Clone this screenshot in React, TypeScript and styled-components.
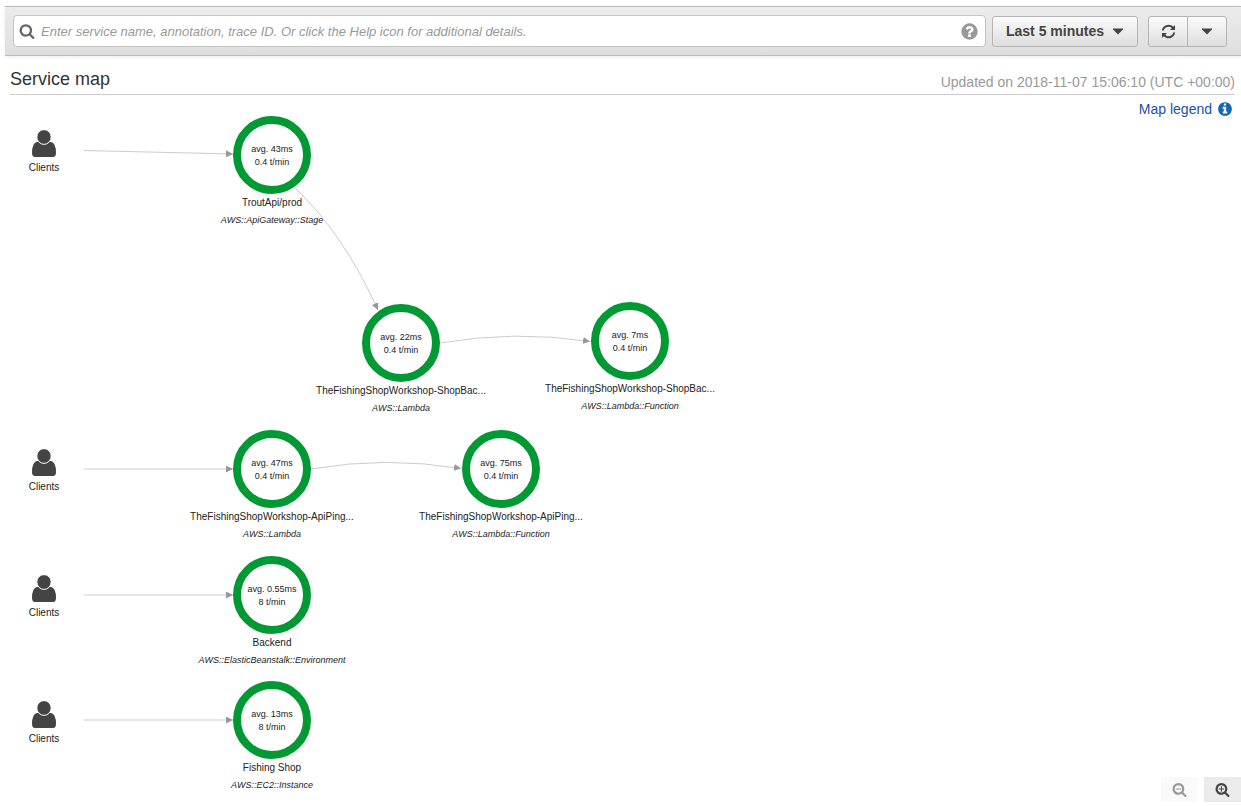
import React from "react";
import styled, { createGlobalStyle } from "styled-components";

const Global = createGlobalStyle`
  *, *::before, *::after { box-sizing: border-box; }
  body {
    margin: 0;
    background: #fff;
    color: #444;
    font-family: "Liberation Sans", Arial, Helvetica, sans-serif;
    font-size: 14px;
  }
`;

const LENS =
  "M1216 832q0-185-131.5-316.5t-316.5-131.5-316.5 131.5-131.5 316.5 131.5 316.5 316.5 131.5 316.5-131.5 131.5-316.5zm512 832q0 52-38 90t-90 38q-54 0-90-38l-343-342q-179 124-399 124-143 0-273.5-55.5t-225-150-150-225-55.5-273.5 55.5-273.5 150-225 225-150 273.5-55.5 273.5 55.5 225 150 150 225 55.5 273.5q0 220-124 399l343 343q37 37 37 90z";
const DISC =
  "M1664 896q0 209-103 385.5t-279.5 279.5-385.5 103-385.5-103-279.5-279.5-103-385.5 103-385.5 279.5-279.5 385.5-103 385.5 103 279.5 279.5 103 385.5z";

const icons = {
  search: LENS,
  zoomIn:
    "M1088 800v64q0 13-9.5 22.5t-22.5 9.5h-224v224q0 13-9.5 22.5t-22.5 9.5h-64q-13 0-22.5-9.5t-9.5-22.5v-224h-224q-13 0-22.5-9.5t-9.5-22.5v-64q0-13 9.5-22.5t22.5-9.5h224v-224q0-13 9.5-22.5t22.5-9.5h64q13 0 22.5 9.5t9.5 22.5v224h224q13 0 22.5 9.5t9.5 22.5z" +
    LENS,
  zoomOut:
    "M1088 800v64q0 13-9.5 22.5t-22.5 9.5h-576q-13 0-22.5-9.5t-9.5-22.5v-64q0-13 9.5-22.5t22.5-9.5h576q13 0 22.5 9.5t9.5 22.5z" +
    LENS,
  help:
    "M1024 1376v-192q0-14-9-23t-23-9h-192q-14 0-23 9t-9 23v192q0 14 9 23t23 9h192q14 0 23-9t9-23zm256-672q0-88-55.5-163t-138.5-116-170-41q-243 0-371 213-15 24 8 42l132 100q7 6 19 6 16 0 25-12 53-68 86-92 34-24 86-24 48 0 85.5 26t37.5 59q0 38-20 61t-68 45q-63 28-115.5 86.5t-52.5 125.5v36q0 14 9 23t23 9h192q14 0 23-9t9-23q0-19 21.5-49.5t54.5-49.5q32-18 49-28.5t46-35 44.5-48 28-60.5 12.5-81z" +
    DISC,
  info:
    "M1152 1376v-160q0-14-9-23t-23-9h-96v-512q0-14-9-23t-23-9h-320q-14 0-23 9t-9 23v160q0 14 9 23t23 9h96v320h-96q-14 0-23 9t-9 23v160q0 14 9 23t23 9h448q14 0 23-9t9-23zm-128-896v-160q0-14-9-23t-23-9h-192q-14 0-23 9t-9 23v160q0 14 9 23t23 9h192q14 0 23-9t9-23z" +
    DISC,
  refresh:
    "M1600 1040q-50 250-248 408t-456 158q-136 0-262-54t-226-150l-140 128q-20 16-40 8t-20-34v-420q0-36 36-36h424q28 0 36 20t-10 40l-148 140q72 72 164 110t190 38q150 0 276-80t188-214q12-32 20-78 6-20 28-20h158q34 0 30 36zM192 752q50-250 248-408t456-158q136 0 262 54t226 150l140-128q20-16 40-8t20 34v420q0 36-36 36h-424q-28 0-36-20t10-40l148-140q-72-72-164-110t-190-38q-150 0-276 80t-188 214q-12 32-20 78-6 20-28 20h-158q-34 0-30-36z",
  caret:
    "M1408 704q0 26-19 45l-448 448q-19 19-45 19t-45-19l-448-448q-19-19-19-45t19-45 45-19h896q26 0 45 19t19 45z",
};

const Icon = ({ name, size }: { name: keyof typeof icons; size: number }) => (
  <svg width={size} height={size} viewBox="0 0 1792 1792" fill="currentColor" fillRule="evenodd" aria-hidden="true">
    <path d={icons[name]} />
  </svg>
);

const Page = styled.div`
  display: flex;
  flex-direction: column;
  min-height: 100vh;
  padding-top: 6px;
`;

const Toolbar = styled.form`
  display: flex;
  align-items: center;
  margin-left: 5px;
  padding: 8px 14px 8px 8px;
  height: 50px;
  border-top: 1px solid #bbb;
  border-bottom: 1px solid #bbb;
  background: linear-gradient(#ececec, #dedede);
  box-shadow: 0 1px 4px rgba(0, 0, 0, 0.08);
`;

const SearchBox = styled.div`
  display: flex;
  flex: 1;
  align-items: center;
  height: 32px;
  padding: 0 6px 0 5px;
  border: 1px solid #c4c4c4;
  border-radius: 4px;
  background: #fff;
  color: #666;
`;

const SearchInput = styled.input`
  flex: 1;
  min-width: 0;
  padding: 0 6px;
  border: 0;
  outline: 0;
  background: none;
  font: italic 13px "Liberation Sans", Arial, sans-serif;
  color: #444;
  &::placeholder { color: #999; opacity: 1; }
`;

const HelpButton = styled.button`
  display: flex;
  padding: 0;
  border: 0;
  background: none;
  color: #999;
`;

const Button = styled.button`
  display: flex;
  align-items: center;
  justify-content: center;
  gap: 5px;
  height: 31px;
  border: 1px solid #b4b4b4;
  border-radius: 3px;
  background: linear-gradient(#fbfbfb, #dedede);
  color: #444;
  font: bold 14px "Liberation Sans", Arial, sans-serif;
  white-space: nowrap;
`;

const RangeButton = styled(Button)`
  margin: 0 10px 0 6px;
  padding: 0 10px 0 13px;
`;

const ButtonGroup = styled.div`
  display: flex;
`;

const GroupButton = styled(Button)`
  width: 40px;
  padding: 0;
  &:first-child { border-radius: 3px 0 0 3px; }
  &:last-child { margin-left: -1px; border-radius: 0 3px 3px 0; }
`;

const Header = styled.header`
  display: flex;
  align-items: center;
  justify-content: space-between;
  height: 39px;
  margin: 0 6px 0 10px;
  padding-top: 8px;
  border-bottom: 1px solid #ccc;
`;

const Title = styled.h1`
  margin: 0;
  color: #333;
  font-size: 18px;
  line-height: 20px;
  font-weight: 400;
`;

const Updated = styled.p`
  margin: 0;
  padding-top: 6px;
  line-height: 20px;
  color: #999;
`;

const MapArea = styled.main`
  position: relative;
  display: flex;
  flex: 1;
  flex-direction: column;
  align-items: flex-end;
  justify-content: space-between;
  min-height: 711px;
  padding: 4px 0;
  overflow: hidden;
`;

const LegendLink = styled.a`
  display: flex;
  align-items: center;
  gap: 5px;
  margin-right: 8px;
  line-height: 20px;
  color: #1a4fb0;
  text-decoration: none;
  svg { color: #1166bb; }
`;

const Edges = styled.svg`
  position: absolute;
  left: 0;
  top: 0;
`;

const Spot = styled.div<{ $x: number; $y: number }>`
  position: absolute;
  left: ${(p) => p.$x}px;
  top: ${(p) => p.$y}px;
  display: flex;
  flex-direction: column;
  align-items: center;
  width: 200px;
  margin-left: -100px;
  color: #222;
  text-align: center;
`;

const Ring = styled.div`
  display: flex;
  flex-direction: column;
  align-items: center;
  justify-content: center;
  width: 78px;
  height: 78px;
  padding-top: 1px;
  border: 8px solid #093;
  border-radius: 50%;
  background: #fff;
  font-size: 9px;
  line-height: 13px;
  white-space: nowrap;
`;

const NodeName = styled.div`
  font-size: 10px;
  line-height: 17px;
  white-space: nowrap;
`;

const NodeType = styled.div`
  font-size: 9px;
  line-height: 18px;
  font-style: italic;
  white-space: nowrap;
`;

const ZoomBar = styled.div`
  position: relative;
  display: flex;
  gap: 6px;
`;

const ZoomButton = styled.button`
  display: flex;
  align-items: center;
  justify-content: center;
  width: 37px;
  height: 25px;
  padding: 0;
  border: 0;
  background: #ebebeb;
  color: #444;
  &:disabled { background: #fafafa; color: #999; }
`;

const services = [
  { x: 272, y: 21, avg: "43ms", rate: "0.4 t/min", name: "TroutApi/prod", type: "AWS::ApiGateway::Stage" },
  { x: 401, y: 209, avg: "22ms", rate: "0.4 t/min", name: "TheFishingShopWorkshop-ShopBac...", type: "AWS::Lambda" },
  { x: 630, y: 207, avg: "7ms", rate: "0.4 t/min", name: "TheFishingShopWorkshop-ShopBac...", type: "AWS::Lambda::Function" },
  { x: 272, y: 335, avg: "47ms", rate: "0.4 t/min", name: "TheFishingShopWorkshop-ApiPing...", type: "AWS::Lambda" },
  { x: 501, y: 335, avg: "75ms", rate: "0.4 t/min", name: "TheFishingShopWorkshop-ApiPing...", type: "AWS::Lambda::Function" },
  { x: 272, y: 461, avg: "0.55ms", rate: "8 t/min", name: "Backend", type: "AWS::ElasticBeanstalk::Environment" },
  { x: 272, y: 586, avg: "13ms", rate: "8 t/min", name: "Fishing Shop", type: "AWS::EC2::Instance" },
];

const clients = [35, 354, 480, 606];

const edges = [
  "M84 55.500L233 59",
  "M84 374H233",
  "M84 500H233",
  "M84 625H233",
  "M295 93Q343 138 378 215",
  "M440 248Q515 235 590 246.500",
  "M311 374Q386 361 461 373.500",
];

export default function App() {
  return (
    <>
      <Global />
      <Page>
        <Toolbar onSubmit={(e) => e.preventDefault()}>
          <SearchBox>
            <Icon name="search" size={16} />
            <SearchInput
              aria-label="Search traces"
              placeholder="Enter service name, annotation, trace ID. Or click the Help icon for additional details."
            />
            <HelpButton type="button" aria-label="Help">
              <Icon name="help" size={19} />
            </HelpButton>
          </SearchBox>
          <RangeButton type="button">
            Last 5 minutes
            <Icon name="caret" size={18} />
          </RangeButton>
          <ButtonGroup>
            <GroupButton type="button" aria-label="Refresh">
              <Icon name="refresh" size={17} />
            </GroupButton>
            <GroupButton type="button" aria-label="Refresh options">
              <Icon name="caret" size={18} />
            </GroupButton>
          </ButtonGroup>
        </Toolbar>
        <Header>
          <Title>Service map</Title>
          <Updated>Updated on 2018-11-07 15:06:10 (UTC +00:00)</Updated>
        </Header>
        <MapArea>
          <LegendLink href="#legend">
            Map legend
            <Icon name="info" size={16} />
          </LegendLink>
          {services.map((s) => (
            <Spot key={s.y + "-" + s.x} $x={s.x} $y={s.y}>
              <Ring>
                <span>avg. {s.avg}</span>
                <span>{s.rate}</span>
              </Ring>
              <NodeName>{s.name}</NodeName>
              <NodeType>{s.type}</NodeType>
            </Spot>
          ))}
          {clients.map((y) => (
            <Spot key={y} $x={44} $y={y}>
              <svg width="24" height="29" viewBox="0 0 24 29" fill="#444" aria-hidden="true">
                <path d="M5 12H19Q24 13 24 23Q24 27 21 27H3Q0 27 0 23Q0 13 5 12Z" />
                <ellipse cx="12" cy="7" rx="7.200" ry="7.400" stroke="#fff" strokeWidth="1" />
              </svg>
              <NodeName>Clients</NodeName>
            </Spot>
          ))}
          <Edges width="700" height="700" fill="none" stroke="#ccc" aria-hidden="true">
            <defs>
              <marker id="arrow" viewBox="0 0 7 7" refX="7" refY="3.500" markerWidth="7" markerHeight="7" orient="auto">
                <path d="M0 0L7 3.500L0 7Z" fill="#999" stroke="none" />
              </marker>
            </defs>
            {edges.map((d) => (
              <path key={d} d={d} markerEnd="url(#arrow)" />
            ))}
          </Edges>
          <ZoomBar>
            <ZoomButton type="button" aria-label="Zoom out" disabled>
              <Icon name="zoomOut" size={15} />
            </ZoomButton>
            <ZoomButton type="button" aria-label="Zoom in">
              <Icon name="zoomIn" size={15} />
            </ZoomButton>
          </ZoomBar>
        </MapArea>
      </Page>
    </>
  );
}
